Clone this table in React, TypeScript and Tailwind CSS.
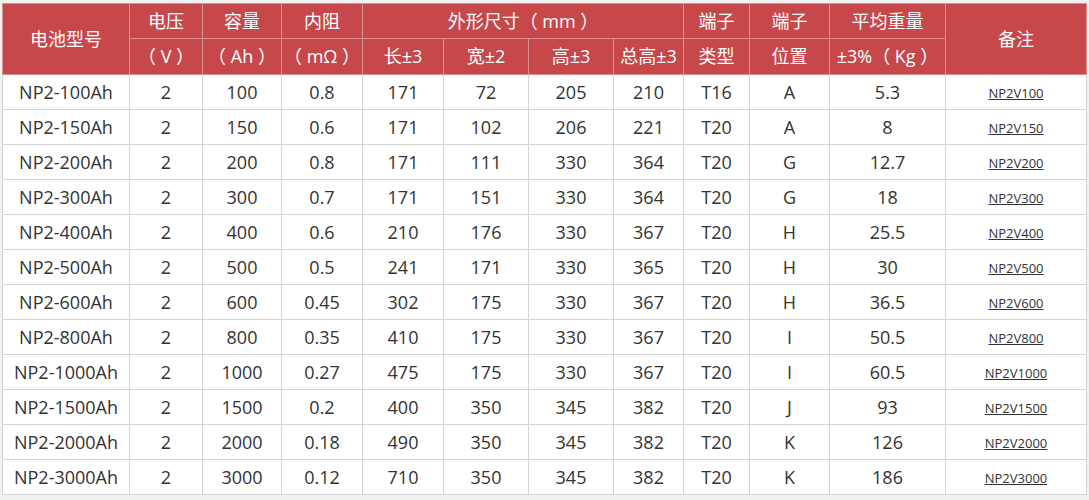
const COLS = [127, 73, 79, 81, 81, 85, 85, 70, 66, 80, 116, 141];

const ROWS: string[][] = [
  ['NP2-100Ah', '2', '100', '0.8', '171', '72', '205', '210', 'T16', 'A', '5.3', 'NP2V100'],
  ['NP2-150Ah', '2', '150', '0.6', '171', '102', '206', '221', 'T20', 'A', '8', 'NP2V150'],
  ['NP2-200Ah', '2', '200', '0.8', '171', '111', '330', '364', 'T20', 'G', '12.7', 'NP2V200'],
  ['NP2-300Ah', '2', '300', '0.7', '171', '151', '330', '364', 'T20', 'G', '18', 'NP2V300'],
  ['NP2-400Ah', '2', '400', '0.6', '210', '176', '330', '367', 'T20', 'H', '25.5', 'NP2V400'],
  ['NP2-500Ah', '2', '500', '0.5', '241', '171', '330', '365', 'T20', 'H', '30', 'NP2V500'],
  ['NP2-600Ah', '2', '600', '0.45', '302', '175', '330', '367', 'T20', 'H', '36.5', 'NP2V600'],
  ['NP2-800Ah', '2', '800', '0.35', '410', '175', '330', '367', 'T20', 'I', '50.5', 'NP2V800'],
  ['NP2-1000Ah', '2', '1000', '0.27', '475', '175', '330', '367', 'T20', 'I', '60.5', 'NP2V1000'],
  ['NP2-1500Ah', '2', '1500', '0.2', '400', '350', '345', '382', 'T20', 'J', '93', 'NP2V1500'],
  ['NP2-2000Ah', '2', '2000', '0.18', '490', '350', '345', '382', 'T20', 'K', '126', 'NP2V2000'],
  ['NP2-3000Ah', '2', '3000', '0.12', '710', '350', '345', '382', 'T20', 'K', '186', 'NP2V3000'],
];

const th = 'border border-[#dc8f8f] text-white font-normal text-[18px] text-center align-middle p-0';
const td = 'border border-[#d4d4d4] text-center align-middle p-0 h-[35px]';

export default function App() {
  return (
    <div
      className="w-[1089px] h-[500px] bg-[#f1f1f1] pt-[3px] pl-[2px] overflow-hidden"
      style={{ fontFamily: '"Open Sans", "Noto Sans CJK SC", sans-serif' }}
    >
      <table className="table-fixed border-collapse w-[1084px] bg-white text-[#333] border border-[#d4d4d4]">
        <colgroup>
          {COLS.map((w, i) => (
            <col key={i} style={{ width: w }} />
          ))}
        </colgroup>
        <thead className="bg-[#c6484a]">
          <tr className="h-[35px]">
            <th rowSpan={2} className={th}>电池型号</th>
            <th className={th}>电压</th>
            <th className={th}>容量</th>
            <th className={th}>内阻</th>
            <th colSpan={4} className={th}>外形尺寸（ mm ）</th>
            <th className={th}>端子</th>
            <th className={th}>端子</th>
            <th className={th}>平均重量</th>
            <th rowSpan={2} className={th}>备注</th>
          </tr>
          <tr className="h-[36px]">
            <th className={th}>（ V ）</th>
            <th className={th}>（ Ah ）</th>
            <th className={th}>（ mΩ ）</th>
            <th className={th}>长±3</th>
            <th className={th}>宽±2</th>
            <th className={th}>高±3</th>
            <th className={th}>总高±3</th>
            <th className={th}>类型</th>
            <th className={th}>位置</th>
            <th className={th}>±3%（ Kg ）</th>
          </tr>
        </thead>
        <tbody>
          {ROWS.map((row) => (
            <tr key={row[0]}>
              {row.map((cell, i) =>
                i === 11 ? (
                  <td key={i} className={td}>
                    <a className="underline text-[13px] text-[#333]">{cell}</a>
                  </td>
                ) : (
                  <td key={i} className={td + ' text-[18px]'}>
                    {cell}
                  </td>
                )
              )}
            </tr>
          ))}
        </tbody>
      </table>
    </div>
  );
}
